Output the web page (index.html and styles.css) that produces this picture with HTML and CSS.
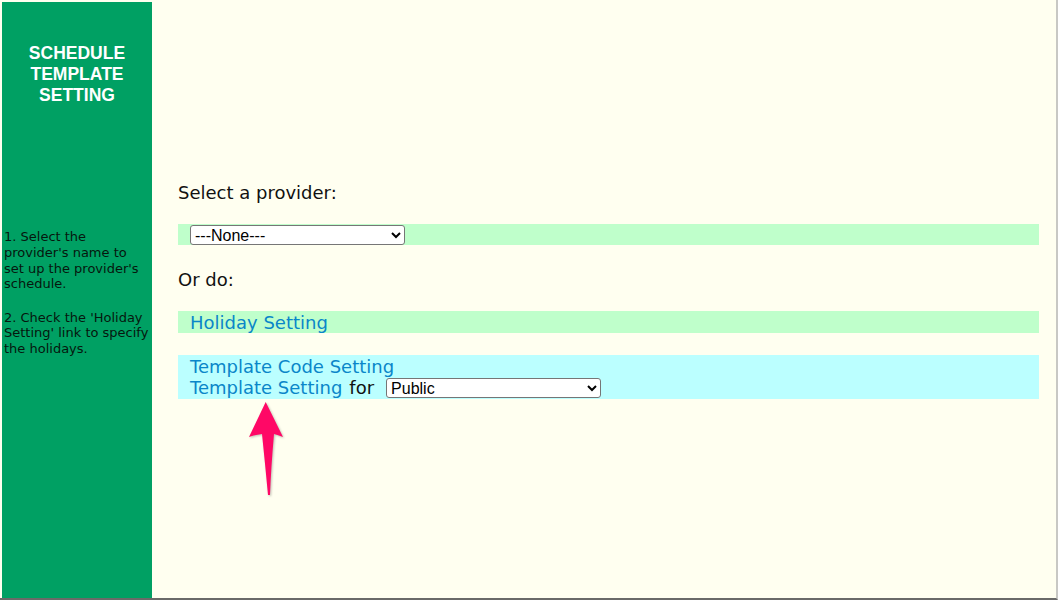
FILE: index.html
```html
<!DOCTYPE html>
<html>
<head>
<meta charset="utf-8">
<link rel="stylesheet" href="styles.css">
</head>
<body>
<div class="frame">
  <aside class="sidebar">
    <h1 class="title">SCHEDULE<br>TEMPLATE<br>SETTING</h1>
    <div class="help">
      <p>1. Select the<br>provider's name to<br>set up the provider's<br>schedule.</p>
      <p>2. Check the 'Holiday<br>Setting' link to specify<br>the holidays.</p>
    </div>
  </aside>
  <main class="content">
    <p class="label first">Select a provider:</p>
    <div class="bar green provider-bar">
      <select class="sel"><option>---None---</option></select>
    </div>
    <p class="label">Or do:</p>
    <div class="bar green link-bar">
      <a class="link" href="#">Holiday Setting</a>
    </div>
    <div class="bar cyan stack">
      <div class="row"><a class="link" href="#">Template Code Setting</a></div>
      <div class="row"><a class="link" href="#">Template Setting</a><span class="for">for</span><select class="sel"><option>Public</option></select></div>
    </div>
  </main>
  <svg class="arrow" width="45" height="102" viewBox="0 0 45 102">
    <path d="M20.7 4 L38 39 Q33 37 29 36 Q26 70 25 97 L23 97 Q20 65 17 36 Q9 37 4 39 Z" fill="#ff0866"/>
  </svg>
</div>
</body>
</html>
```
FILE: styles.css
```css
html, body {
  margin: 0;
  padding: 0;
  background: #fffff0;
}
body {
  font-family: "DejaVu Sans", Verdana, sans-serif;
}
.frame {
  position: relative;
  box-sizing: border-box;
  width: 1058px;
  height: 600px;
  padding: 2px 0 0 2px;
  border-right: 2px solid #c8c8c4;
  border-bottom: 2px solid #6a6a68;
  display: flex;
}
.sidebar {
  width: 150px;
  flex: none;
  background: #00a063;
  color: #06170e;
}
.title {
  margin: 41px 0 0;
  font-family: "Liberation Sans", Arial, sans-serif;
  font-weight: bold;
  font-size: 17.5px;
  line-height: 21px;
  color: #ffffff;
  text-align: center;
}
.help {
  margin-top: 123px;
  padding-left: 2px;
  font-size: 13px;
  line-height: 15.8px;
  white-space: nowrap;
}
.help p {
  margin: 0 0 17.5px;
}
.content {
  flex: 1;
  padding: 0 17px 0 26px;
  font-size: 18px;
  color: #111;
}
.label {
  margin: 24px 0 0;
  line-height: 21px;
}
.label.first {
  margin-top: 180px;
}
.bar {
  padding-left: 12px;
}
.green {
  background: #bfffcb;
}
.cyan {
  background: #bbffff;
}
.bar.green {
  height: 21px;
  display: flex;
  align-items: center;
}
.provider-bar {
  margin-top: 21px;
}
.link-bar {
  margin-top: 21px;
  height: 22px !important;
}
.stack {
  margin-top: 22px;
  padding-top: 1px;
  height: 43px;
}
.row {
  display: flex;
  align-items: center;
  height: 21px;
}
.link {
  color: #0a86c9;
  text-decoration: none;
  line-height: 21px;
}
.for {
  margin: 0 12px 0 7px;
}
.sel {
  width: 215px;
  height: 20px;
  box-sizing: border-box;
  font-family: "Liberation Sans", Arial, sans-serif;
  font-size: 16px;
  background: #fff;
  color: #000;
  border: 1px solid #767676;
  border-radius: 3px;
  padding: 0;
}
.arrow {
  position: absolute;
  left: 245px;
  top: 398px;
  filter: drop-shadow(1px 1px 1px rgba(0,0,0,0.25));
}
```
